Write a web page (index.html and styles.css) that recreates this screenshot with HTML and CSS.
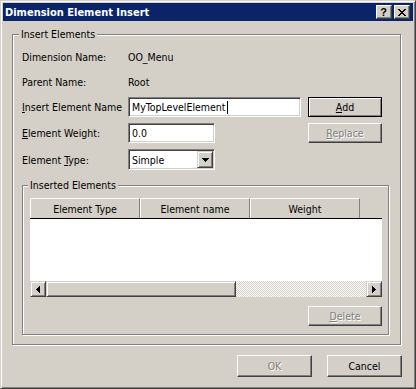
FILE: index.html
```html
<!DOCTYPE html>
<html lang="en">
<head>
    <meta charset="UTF-8">
    <title>Dimension Element Insert</title>
    <link rel="stylesheet" href="styles.css">
</head>
<body>
    <div class="window">
        <div class="titlebar">
            <span class="title">Dimension Element Insert</span>
            <div class="caption-btns">
                <span class="cap-btn help">?</span>
                <span class="cap-btn">
                    <svg width="8" height="7" viewBox="0 0 8 7" shape-rendering="crispEdges">
                        <rect x="0" y="0" width="2" height="1"/><rect x="6" y="0" width="2" height="1"/>
                        <rect x="1" y="1" width="2" height="1"/><rect x="5" y="1" width="2" height="1"/>
                        <rect x="2" y="2" width="4" height="1"/>
                        <rect x="3" y="3" width="2" height="1"/>
                        <rect x="2" y="4" width="4" height="1"/>
                        <rect x="1" y="5" width="2" height="1"/><rect x="5" y="5" width="2" height="1"/>
                        <rect x="0" y="6" width="2" height="1"/><rect x="6" y="6" width="2" height="1"/>
                    </svg>
                </span>
            </div>
        </div>

        <div class="group outer">
            <div class="group-title">Insert Elements</div>
            <div class="form-grid">
                <div class="lbl">Dimension Name:</div>
                <div class="val">OO_Menu</div>

                <div class="lbl">Parent Name:</div>
                <div class="val">Root</div>

                <div class="lbl"><u>I</u>nsert Element Name</div>
                <div><div class="field name-field">MyTopLevelElement<span class="caret"></span></div></div>
                <button class="btn default"><u>A</u>dd</button>

                <div class="lbl"><u>E</u>lement Weight:</div>
                <div><div class="field weight-field">0.0</div></div>
                <button class="btn" disabled><u>R</u>eplace</button>

                <div class="lbl">Element <u>T</u>ype:</div>
                <div>
                    <div class="combo">
                        <span>Simple</span>
                        <span class="combo-btn">
                            <svg width="7" height="4" viewBox="0 0 7 4" shape-rendering="crispEdges">
                                <rect x="0" y="0" width="7" height="1"/>
                                <rect x="1" y="1" width="5" height="1"/>
                                <rect x="2" y="2" width="3" height="1"/>
                                <rect x="3" y="3" width="1" height="1"/>
                            </svg>
                        </span>
                    </div>
                </div>
            </div>

            <div class="group inner">
                <div class="group-title">Inserted Elements</div>
                <div class="listview">
                    <div class="lv-header">
                        <div class="lv-col">Element Type</div>
                        <div class="lv-col">Element name</div>
                        <div class="lv-col">Weight</div>
                    </div>
                    <div class="lv-body"></div>
                    <div class="hscroll">
                        <span class="sb-btn">
                            <svg width="4" height="7" viewBox="0 0 4 7" shape-rendering="crispEdges">
                                <rect x="0" y="3" width="1" height="1"/>
                                <rect x="1" y="2" width="1" height="3"/>
                                <rect x="2" y="1" width="1" height="5"/>
                                <rect x="3" y="0" width="1" height="7"/>
                            </svg>
                        </span>
                        <span class="sb-thumb"></span>
                        <span class="sb-track"></span>
                        <span class="sb-btn">
                            <svg width="4" height="7" viewBox="0 0 4 7" shape-rendering="crispEdges">
                                <rect x="0" y="0" width="1" height="7"/>
                                <rect x="1" y="1" width="1" height="5"/>
                                <rect x="2" y="2" width="1" height="3"/>
                                <rect x="3" y="3" width="1" height="1"/>
                            </svg>
                        </span>
                    </div>
                </div>
                <div class="actions">
                    <button class="btn" disabled><u>D</u>elete</button>
                </div>
            </div>
        </div>

        <div class="footer">
            <button class="btn big" disabled>OK</button>
            <button class="btn big">Cancel</button>
        </div>
    </div>
</body>
</html>
```

FILE: styles.css
```css
* {
    box-sizing: border-box;
}

body {
    margin: 0;
    font-family: "DejaVu Sans Condensed", "Liberation Sans", sans-serif;
    font-size: 10.5px;
    color: #000;
    background: #fff;
}

.window {
    width: 416px;
    height: 389px;
    background: #d4d0c8;
    border: 1px solid;
    border-color: #d4d0c8 #404040 #404040 #d4d0c8;
    box-shadow: inset 1px 1px #fff, inset -1px -1px #808080;
    padding: 2px;
}

.titlebar {
    height: 18px;
    background: #0a246a;
    display: flex;
    align-items: center;
    justify-content: space-between;
    padding: 0 3px 0 2px;
}

.title {
    color: #fff;
    font-size: 11px;
    font-weight: bold;
}

.caption-btns {
    display: flex;
    gap: 2px;
}

.cap-btn {
    width: 16px;
    height: 14px;
    background: #d4d0c8;
    border: 1px solid;
    border-color: #fff #404040 #404040 #fff;
    box-shadow: inset -1px -1px #808080;
    display: flex;
    align-items: center;
    justify-content: center;
}

.cap-btn.help {
    font-family: "Liberation Sans", sans-serif;
    font-weight: bold;
    font-size: 11px;
    line-height: 12px;
    padding-right: 1px;
}

/* group boxes */
.group {
    border: 1px solid #808080;
    box-shadow: inset 1px 1px #fff, 1px 1px #fff;
}

.group.outer {
    margin: 13px 12px 0 9px;
    padding: 0 11px 9px 9px;
}

.group.inner {
    margin-top: 15px;
    padding: 0 6px 8px 7px;
}

.group-title {
    width: fit-content;
    background: #d4d0c8;
    line-height: 13px;
    margin: -7px 0 0 -3px;
    padding: 0 2px;
}

.group.inner .group-title {
    margin-left: -2px;
}

.form-grid {
    margin-top: 6px;
    display: grid;
    grid-template-columns: 106px 180px 74px;
    grid-template-rows: 20px 18px 20px 20px 21px;
    row-gap: 6px;
    align-items: center;
}

.val {
    grid-column: span 2;
}

.field {
    height: 20px;
    background: #fff;
    border: 1px solid;
    border-color: #808080 #fff #fff #808080;
    box-shadow: inset 1px 1px #404040, inset -1px -1px #d4d0c8;
    padding: 0 3px;
    display: flex;
    align-items: center;
    white-space: nowrap;
}

.name-field {
    width: 173px;
}

.weight-field {
    width: 87px;
}

.caret {
    display: inline-block;
    width: 1px;
    height: 13px;
    background: #000;
    margin-left: 1px;
}

.combo {
    width: 87px;
    height: 21px;
    background: #fff;
    border: 1px solid;
    border-color: #808080 #fff #fff #808080;
    box-shadow: inset 1px 1px #404040, inset -1px -1px #d4d0c8;
    padding: 1px 1px 1px 3px;
    display: flex;
    align-items: center;
    justify-content: space-between;
}

.combo-btn {
    width: 16px;
    height: 17px;
    background: #d4d0c8;
    border: 1px solid;
    border-color: #d4d0c8 #404040 #404040 #d4d0c8;
    box-shadow: inset 1px 1px #fff, inset -1px -1px #808080;
    display: flex;
    align-items: center;
    justify-content: center;
}

/* buttons */
.btn {
    font: inherit;
    color: #000;
    width: 74px;
    height: 20px;
    padding: 0;
    background: #d4d0c8;
    border: 1px solid;
    border-color: #fff #404040 #404040 #fff;
    box-shadow: inset -1px -1px #808080;
}

.btn.default {
    border-color: #000;
    box-shadow: inset 1px 1px #fff, inset -1px -1px #808080;
}

.btn:disabled {
    color: #808080;
    text-shadow: 1px 1px #fff;
}

.btn.big {
    width: 75px;
    height: 22px;
}

/* list view */
.listview {
    margin-top: 6px;
    background: #fff;
}

.lv-header {
    display: flex;
    height: 21px;
    background: #d4d0c8;
    border-bottom: 1px solid #000;
}

.lv-col {
    width: 110px;
    border-top: 1px solid #fff;
    border-left: 1px solid #fff;
    border-right: 1px solid #808080;
    display: flex;
    align-items: center;
    justify-content: center;
}

.lv-body {
    height: 62px;
}

.hscroll {
    display: flex;
    height: 16px;
}

.sb-btn {
    width: 16px;
    height: 16px;
    background: #d4d0c8;
    border: 1px solid;
    border-color: #d4d0c8 #404040 #404040 #d4d0c8;
    box-shadow: inset 1px 1px #fff, inset -1px -1px #808080;
    display: flex;
    align-items: center;
    justify-content: center;
}

.sb-thumb {
    width: 190px;
    background: #d4d0c8;
    border: 1px solid;
    border-color: #d4d0c8 #404040 #404040 #d4d0c8;
    box-shadow: inset 1px 1px #fff, inset -1px -1px #808080;
}

.sb-track {
    flex: 1;
    background: repeating-conic-gradient(#d4d0c8 0 25%, #fff 0 50%) 0 0 / 2px 2px;
}

.actions {
    display: flex;
    justify-content: flex-end;
    margin-top: 9px;
}

.footer {
    display: flex;
    justify-content: flex-end;
    gap: 15px;
    margin: 10px 11px 0 0;
}
```
